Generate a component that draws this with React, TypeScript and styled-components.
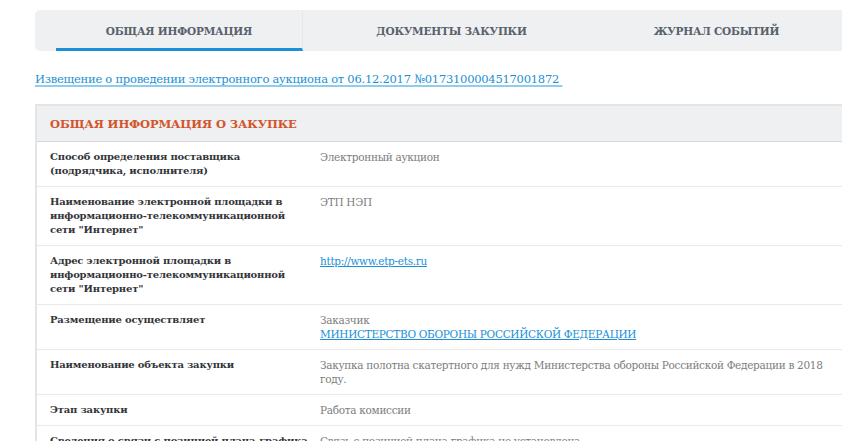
import React from "react";
import styled, { createGlobalStyle } from "styled-components";

const GlobalStyle = createGlobalStyle`
  html, body {
    margin: 0;
    padding: 0;
    background: #ffffff;
    overflow: hidden;
  }
  body {
    font-family: "DejaVu Serif", "Liberation Serif", serif;
  }
`;

const Page = styled.div`
  width: 830px;
  padding: 10px 0 0 35px;
`;

const TabBar = styled.div`
  display: flex;
  height: 41px;
  padding-left: 21px;
  background-color: #eef0f2;
  border-radius: 5px 0 0 5px;
`;

const Tab = styled.div<{ $width: number; $active?: boolean }>`
  display: flex;
  align-items: center;
  justify-content: center;
  box-sizing: border-box;
  width: ${(p) => p.$width}px;
  padding-top: 3px;
  border-bottom: 3px solid ${(p) => (p.$active ? "#1b8fd7" : "transparent")};
  border-right: 1px solid ${(p) => (p.$active ? "#e6e8eb" : "transparent")};
  color: #59616b;
  font-size: 10.5px;
  font-weight: bold;
  text-transform: uppercase;
  letter-spacing: -0.2px;
`;

const NoticeLink = styled.a`
  display: inline-block;
  margin-top: 20px;
  color: #1a8fd6;
  font-size: 11.5px;
  line-height: 16px;
  letter-spacing: -0.25px;
  text-decoration: underline;
  text-decoration-color: #8fcdee;
  text-decoration-thickness: 2px;
  text-decoration-skip-ink: none;
  text-underline-offset: 2px;
  white-space: pre;
`;

const Panel = styled.section`
  margin-top: 17px;
  border: 2px solid #e3e4e6;
  border-right: none;
`;

const PanelHeader = styled.div`
  display: flex;
  align-items: center;
  height: 35px;
  padding-left: 13px;
  background-color: #eef0f2;
  border-bottom: 1px solid #d6d8db;
  color: #d4542a;
  font-size: 11.5px;
  font-weight: bold;
  text-transform: uppercase;
  letter-spacing: -0.1px;
`;

const Row = styled.div`
  display: grid;
  grid-template-columns: 278px 1fr;
  border-bottom: 1px solid #e9eaeb;
  line-height: 14px;
`;

const Label = styled.div`
  padding: 8px 6px 8px 13px;
  color: #333539;
  font-size: 10px;
  font-weight: bold;
  letter-spacing: -0.2px;
`;

const Value = styled.div`
  padding: 8px 15px 8px 5px;
  color: #7d7d7d;
  font-size: 10.5px;
  letter-spacing: -0.3px;
`;

const ValueLink = styled.a`
  color: #1a8fd6;
  text-decoration: underline;
  text-underline-offset: 1px;
`;

type Item = { label: string; value: React.ReactNode };

const items: Item[] = [
  {
    label: "Способ определения поставщика (подрядчика, исполнителя)",
    value: "Электронный аукцион",
  },
  {
    label: "Наименование электронной площадки в информационно-телекоммуникационной сети \"Интернет\"",
    value: "ЭТП НЭП",
  },
  {
    label: "Адрес электронной площадки в информационно-телекоммуникационной сети \"Интернет\"",
    value: <ValueLink href="#">http://www.etp-ets.ru</ValueLink>,
  },
  {
    label: "Размещение осуществляет",
    value: (
      <>
        Заказчик
        <br />
        <ValueLink href="#">МИНИСТЕРСТВО ОБОРОНЫ РОССИЙСКОЙ ФЕДЕРАЦИИ</ValueLink>
      </>
    ),
  },
  {
    label: "Наименование объекта закупки",
    value: "Закупка полотна скатертного для нужд Министерства обороны Российской Федерации в 2018 году.",
  },
  {
    label: "Этап закупки",
    value: "Работа комиссии",
  },
  {
    label: "Сведения о связи с позицией плана-графика",
    value: "Связь с позицией плана-графика не установлена",
  },
];

export default function App() {
  return (
    <Page>
      <GlobalStyle />
      <TabBar>
        <Tab $width={247} $active>Общая информация</Tab>
        <Tab $width={298}>Документы закупки</Tab>
        <Tab $width={232}>Журнал событий</Tab>
      </TabBar>
      <NoticeLink href="#">
        Извещение о проведении электронного аукциона от 06.12.2017 №0173100004517001872{" "}
      </NoticeLink>
      <Panel>
        <PanelHeader>Общая информация о закупке</PanelHeader>
        {items.map((item) => (
          <Row key={item.label}>
            <Label>{item.label}</Label>
            <Value>{item.value}</Value>
          </Row>
        ))}
      </Panel>
    </Page>
  );
}
